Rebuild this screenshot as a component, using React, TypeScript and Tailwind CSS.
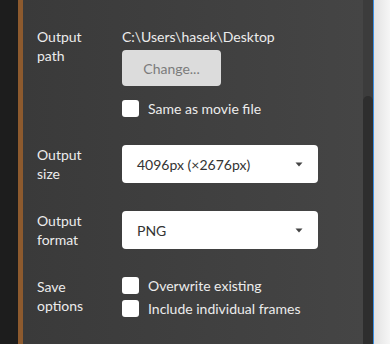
import React from "react";

const Checkbox = () => (
  <div className="w-[17px] h-[17px] shrink-0 rounded-[3px] bg-white" />
);

const Caret = () => (
  <svg width="8" height="5" viewBox="0 0 8 5" className="shrink-0">
    <path d="M0.5 0.5 L7.5 0.5 L4 4.5 Z" fill="#444" />
  </svg>
);

const Select = ({ value }: { value: string }) => (
  <div className="w-[196px] h-[38px] rounded-[4px] bg-white flex items-center justify-between pl-[15px] pr-[15px]">
    <span className="text-[14px] leading-[19px] text-[#333]">{value}</span>
    <Caret />
  </div>
);

const Label = ({ a, b }: { a: string; b: string }) => (
  <div className="w-[85px] shrink-0 text-[14px] leading-[19px] text-[#ececec]">
    <div>{a}</div>
    <div>{b}</div>
  </div>
);

const Check = ({ text }: { text: string }) => (
  <div className="h-[17px] flex items-center gap-[9px]">
    <Checkbox />
    <span className="text-[14px] leading-[17px] text-[#ececec]">{text}</span>
  </div>
);

export default function App() {
  return (
    <div
      className="w-[390px] h-[344px] flex overflow-hidden"
      style={{ fontFamily: "Lato, 'Open Sans', sans-serif" }}
    >
      <div className="w-[18px] bg-[#1d1d1d]" />
      <div className="w-[5px] bg-[#8d5a2e]" />
      <div className="w-[340px] bg-gradient-to-r from-[#3a3a3a] to-[#454545] pl-[14px] pt-[27px] flex flex-col gap-[28px]">
        <div className="flex items-start">
          <Label a="Output" b="path" />
          <div className="flex flex-col items-start">
            <div className="text-[14px] leading-[19px] text-[#ececec]">C:\Users\hasek\Desktop</div>
            <div className="mt-[4px] w-[99px] h-[36px] rounded-[4px] bg-[#dcdcdc] flex items-center justify-center text-[14px] text-[#7b7b7b]">
              Change...
            </div>
            <div className="mt-[14px]">
              <Check text="Same as movie file" />
            </div>
          </div>
        </div>
        <div className="flex items-center">
          <Label a="Output" b="size" />
          <Select value="4096px (×2676px)" />
        </div>
        <div className="flex items-center">
          <Label a="Output" b="format" />
          <Select value="PNG" />
        </div>
        <div className="flex items-start">
          <Label a="Save" b="options" />
          <div className="flex flex-col gap-[6px]">
            <Check text="Overwrite existing" />
            <Check text="Include individual frames" />
          </div>
        </div>
      </div>
      <div className="w-[10px] bg-[#3c3c3c] flex flex-col">
        <div className="h-[96px]" />
        <div className="flex-1 rounded-t-[5px] bg-[#2e2e2e]" />
      </div>
      <div className="w-[1px] bg-[#3a8ee2]" />
      <div className="flex-1 bg-gradient-to-r from-[#e2e2e2] to-[#f6f6f6]" />
    </div>
  );
}
